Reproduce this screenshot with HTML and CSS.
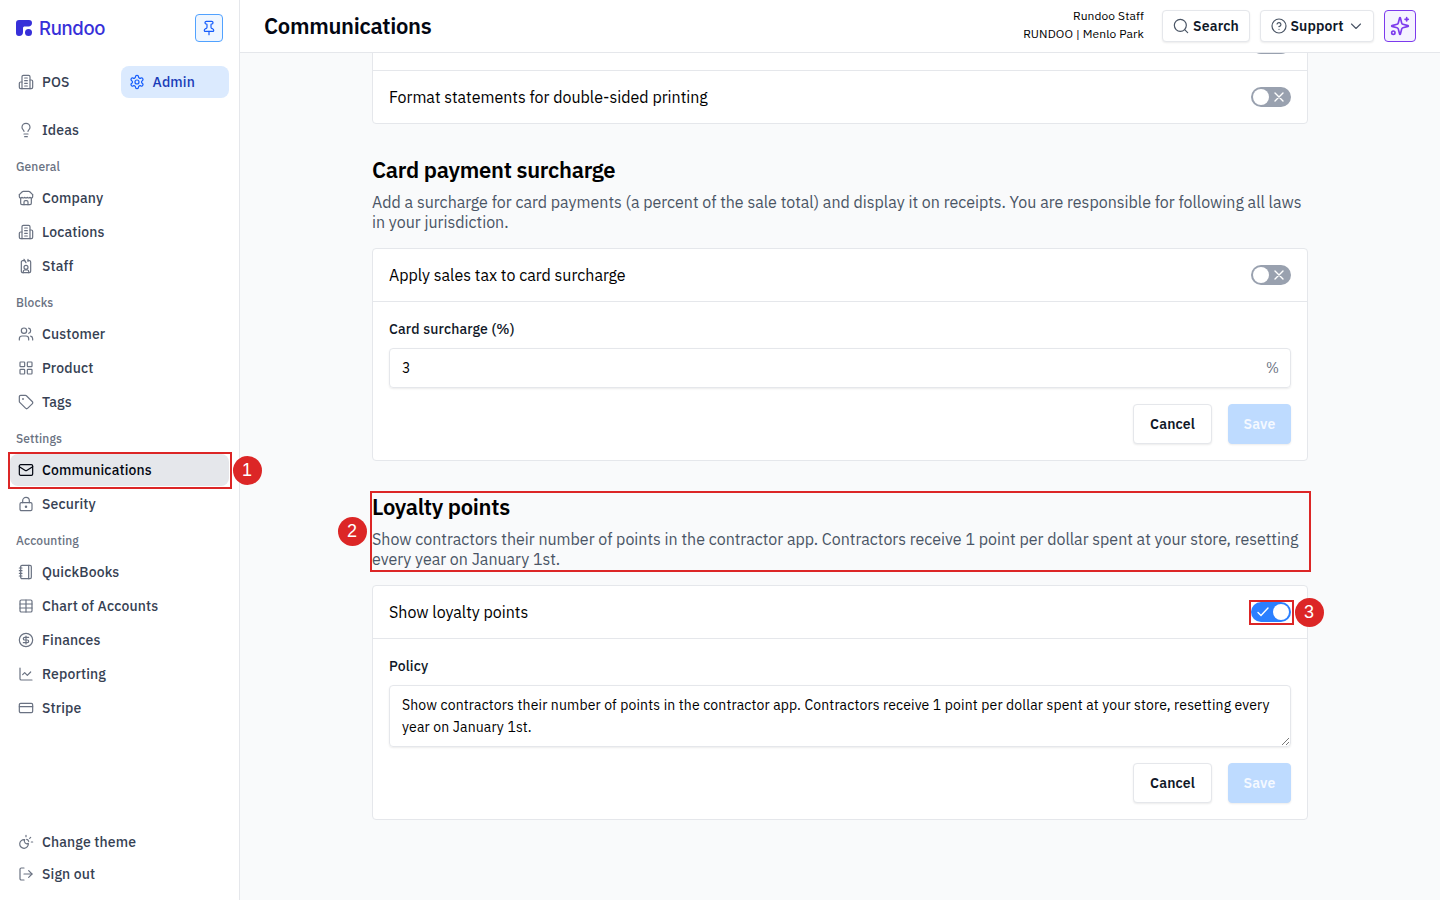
FILE: index.html
```html
<!DOCTYPE html>
<html lang="en">
<head>
  <meta charset="UTF-8" />
  <meta name="viewport" content="width=device-width, initial-scale=1.0" />
  <title>Communications</title>
  <link rel="stylesheet" href="styles.css">
</head>
<body>
  <aside class="sidebar">
    <div class="brand">
      <div class="logo">
        <svg width="16" height="16" viewBox="0 0 16 16" fill="currentColor"><path d="M3 0h10a3 3 0 0 1 3 3c0 2.200-1.500 3.500-3.500 3.500H9c-1.500 0-2 .5-2 2V12a4 4 0 0 1-4 4 3 3 0 0 1-3-3V3a3 3 0 0 1 3-3z"/><circle cx="12.500" cy="12.500" r="3.500"/></svg>
        <span>Rundoo</span>
      </div>
      <button class="pin-btn">
        <svg class="icon" viewBox="0 0 24 24"><path d="M12 17v5"/><path d="M9 10.760a2 2 0 0 1-1.110 1.790l-1.780.9A2 2 0 0 0 5 15.240V16a1 1 0 0 0 1 1h12a1 1 0 0 0 1-1v-.760a2 2 0 0 0-1.110-1.790l-1.780-.9A2 2 0 0 1 15 10.760V7a1 1 0 0 1 1-1 2 2 0 0 0 0-4H8a2 2 0 0 0 0 4 1 1 0 0 1 1 1z"/></svg>
      </button>
    </div>

    <nav class="nav">
      <div class="modes">
        <a class="nav-item"><svg class="icon" viewBox="0 0 24 24"><path d="M6 22V4a2 2 0 0 1 2-2h8a2 2 0 0 1 2 2v18Z"/><path d="M6 12H4a2 2 0 0 0-2 2v6a2 2 0 0 0 2 2h2"/><path d="M18 9h2a2 2 0 0 1 2 2v9a2 2 0 0 1-2 2h-2"/><path d="M10 6h4M10 10h4M10 14h4M10 18h4"/></svg><span>POS</span></a>
        <a class="nav-item admin"><svg class="icon" viewBox="0 0 24 24"><path d="M12.220 2h-.440a2 2 0 0 0-2 2v.180a2 2 0 0 1-1 1.730l-.430.250a2 2 0 0 1-2 0l-.150-.080a2 2 0 0 0-2.730.730l-.220.380a2 2 0 0 0 .730 2.730l.150.100a2 2 0 0 1 1 1.720v.510a2 2 0 0 1-1 1.740l-.150.090a2 2 0 0 0-.730 2.730l.220.380a2 2 0 0 0 2.730.730l.150-.080a2 2 0 0 1 2 0l.430.250a2 2 0 0 1 1 1.730V20a2 2 0 0 0 2 2h.440a2 2 0 0 0 2-2v-.180a2 2 0 0 1 1-1.730l.430-.250a2 2 0 0 1 2 0l.150.080a2 2 0 0 0 2.730-.730l.220-.390a2 2 0 0 0-.730-2.730l-.150-.080a2 2 0 0 1-1-1.740v-.500a2 2 0 0 1 1-1.740l.150-.090a2 2 0 0 0 .730-2.730l-.220-.380a2 2 0 0 0-2.730-.730l-.150.080a2 2 0 0 1-2 0l-.430-.250a2 2 0 0 1-1-1.730V4a2 2 0 0 0-2-2z"/><circle cx="12" cy="12" r="3"/></svg><span>Admin</span></a>
      </div>

      <a class="nav-item"><svg class="icon" viewBox="0 0 24 24"><path d="M15 14c.200-1 .700-1.700 1.500-2.500 1-.900 1.500-2.200 1.500-3.500A6 6 0 0 0 6 8c0 1 .200 2.200 1.500 3.500.700.700 1.300 1.500 1.500 2.500"/><path d="M9 18h6"/><path d="M10 22h4"/></svg><span>Ideas</span></a>

      <h3 class="nav-label">General</h3>
      <a class="nav-item"><svg class="icon" viewBox="0 0 24 24"><path d="m2 7 4.410-4.410A2 2 0 0 1 7.830 2h8.340a2 2 0 0 1 1.420.590L22 7"/><path d="M4 12v8a2 2 0 0 0 2 2h12a2 2 0 0 0 2-2v-8"/><path d="M15 22v-4a2 2 0 0 0-2-2h-2a2 2 0 0 0-2 2v4"/><path d="M2 7v3a2 2 0 0 0 2 2 2.700 2.700 0 0 0 1.590-.630.700.700 0 0 1 .820 0A2.700 2.700 0 0 0 8 12a2.700 2.700 0 0 0 1.590-.630.700.700 0 0 1 .820 0A2.700 2.700 0 0 0 12 12a2.700 2.700 0 0 0 1.590-.630.700.700 0 0 1 .820 0A2.700 2.700 0 0 0 16 12a2.700 2.700 0 0 0 1.590-.630.700.700 0 0 1 .820 0A2.700 2.700 0 0 0 20 12a2 2 0 0 0 2-2V7"/></svg><span>Company</span></a>
      <a class="nav-item"><svg class="icon" viewBox="0 0 24 24"><path d="M6 22V4a2 2 0 0 1 2-2h8a2 2 0 0 1 2 2v18Z"/><path d="M6 12H4a2 2 0 0 0-2 2v6a2 2 0 0 0 2 2h2"/><path d="M18 9h2a2 2 0 0 1 2 2v9a2 2 0 0 1-2 2h-2"/><path d="M10 6h4M10 10h4M10 14h4M10 18h4"/></svg><span>Locations</span></a>
      <a class="nav-item"><svg class="icon" viewBox="0 0 24 24"><path d="M15 2v3M9 2l3 5"/><path d="M15 4h2a2 2 0 0 1 2 2v14a2 2 0 0 1-2 2H7a2 2 0 0 1-2-2V6a2 2 0 0 1 2-2h3"/><path d="M16 22v-2a2 2 0 0 0-2-2h-4a2 2 0 0 0-2 2v2"/><circle cx="12" cy="14" r="3"/></svg><span>Staff</span></a>

      <h3 class="nav-label">Blocks</h3>
      <a class="nav-item"><svg class="icon" viewBox="0 0 24 24"><path d="M16 21v-2a4 4 0 0 0-4-4H6a4 4 0 0 0-4 4v2"/><circle cx="9" cy="7" r="4"/><path d="M22 21v-2a4 4 0 0 0-3-3.870"/><path d="M16 3.130a4 4 0 0 1 0 7.750"/></svg><span>Customer</span></a>
      <a class="nav-item"><svg class="icon" viewBox="0 0 24 24"><rect width="7" height="7" x="3" y="3" rx="1"/><rect width="7" height="7" x="14" y="3" rx="1"/><rect width="7" height="7" x="14" y="14" rx="1"/><rect width="7" height="7" x="3" y="14" rx="1"/></svg><span>Product</span></a>
      <a class="nav-item"><svg class="icon" viewBox="0 0 24 24"><path d="M12.586 2.586A2 2 0 0 0 11.172 2H4a2 2 0 0 0-2 2v7.172a2 2 0 0 0 .586 1.414l8.704 8.704a2.426 2.426 0 0 0 3.420 0l6.580-6.580a2.426 2.426 0 0 0 0-3.420z"/><circle cx="7.500" cy="7.500" r=".5" fill="currentColor"/></svg><span>Tags</span></a>

      <h3 class="nav-label">Settings</h3>
      <a class="nav-item active"><svg class="icon" viewBox="0 0 24 24"><rect width="20" height="16" x="2" y="4" rx="2"/><path d="m22 7-8.970 5.700a1.940 1.940 0 0 1-2.060 0L2 7"/></svg><span>Communications</span></a>
      <a class="nav-item"><svg class="icon" viewBox="0 0 24 24"><circle cx="12" cy="16" r="1"/><rect x="3" y="10" width="18" height="12" rx="2"/><path d="M7 10V7a5 5 0 0 1 10 0v3"/></svg><span>Security</span></a>

      <h3 class="nav-label">Accounting</h3>
      <a class="nav-item"><svg class="icon" viewBox="0 0 24 24"><path d="M2 6h4M2 10h4M2 14h4M2 18h4"/><rect width="16" height="20" x="4" y="2" rx="2"/><path d="M16 2v20"/></svg><span>QuickBooks</span></a>
      <a class="nav-item"><svg class="icon" viewBox="0 0 24 24"><path d="M12 3v18"/><rect width="18" height="18" x="3" y="3" rx="2"/><path d="M3 9h18M3 15h18"/></svg><span>Chart of Accounts</span></a>
      <a class="nav-item"><svg class="icon" viewBox="0 0 24 24"><circle cx="12" cy="12" r="10"/><path d="M16 8h-6a2 2 0 1 0 0 4h4a2 2 0 1 1 0 4H8"/><path d="M12 18V6"/></svg><span>Finances</span></a>
      <a class="nav-item"><svg class="icon" viewBox="0 0 24 24"><path d="M3 3v16a2 2 0 0 0 2 2h16"/><path d="m7 13 3-3 4 4 5-5"/></svg><span>Reporting</span></a>
      <a class="nav-item"><svg class="icon" viewBox="0 0 24 24"><rect width="20" height="14" x="2" y="5" rx="2"/><path d="M2 10h20"/></svg><span>Stripe</span></a>
    </nav>

    <div class="nav-footer">
      <a class="nav-item"><svg class="icon" viewBox="0 0 24 24"><path d="M12 2v2M19 5l-1.500 1.500M20 12h2M10 8.500a4 4 0 0 0 5.500 5.500A6.500 6.500 0 1 1 10 8.500M13 8a4 4 0 0 1 3 3"/></svg><span>Change theme</span></a>
      <a class="nav-item"><svg class="icon" viewBox="0 0 24 24"><path d="M9 21H5a2 2 0 0 1-2-2V5a2 2 0 0 1 2-2h4"/><path d="m16 17 5-5-5-5"/><path d="M21 12H9"/></svg><span>Sign out</span></a>
    </div>
  </aside>

  <div class="page">
    <header class="topbar">
      <h1>Communications</h1>
      <div class="account">
        <span>Rundoo Staff</span>
        <span>RUNDOO | Menlo Park</span>
      </div>
      <button class="btn top-btn search-btn">
        <svg class="icon" viewBox="0 0 24 24"><circle cx="11" cy="11" r="9"/><path d="m22 22-4.500-4.500"/></svg>
        <span>Search</span>
      </button>
      <button class="btn top-btn support-btn">
        <svg class="icon" viewBox="0 0 24 24"><circle cx="12" cy="12" r="10.500"/><path d="M9.090 9a3 3 0 0 1 5.830 1c0 2-3 3-3 3"/><path d="M12 17h.010"/></svg>
        <span>Support</span>
        <svg class="icon chevron" viewBox="0 0 24 24"><path d="m3 8 9 9 9-9"/></svg>
      </button>
      <button class="ai-btn">
        <svg class="icon" viewBox="0 0 24 24"><path d="M9.937 15.500A2 2 0 0 0 8.500 14.063l-6.135-1.582a.5.5 0 0 1 0-.962L8.500 9.936A2 2 0 0 0 9.937 8.500l1.582-6.135a.5.5 0 0 1 .963 0L14.063 8.500A2 2 0 0 0 15.500 9.937l6.135 1.581a.5.5 0 0 1 0 .964L15.500 14.063a2 2 0 0 0-1.437 1.437l-1.582 6.135a.5.5 0 0 1-.963 0z"/><path d="M20 2v4M22 4h-4"/><circle cx="4" cy="20" r="2"/></svg>
      </button>
    </header>

    <main class="content">
      <div class="column">
        <div class="card statements">
          <div class="row">
            <span>Apply account credit when customers repay</span>
            <div class="toggle"><i></i><svg viewBox="0 0 10 10"><path d="m1 1 8 8M9 1 1 9"/></svg></div>
          </div>
          <div class="row">
            <span>Format statements for double-sided printing</span>
            <div class="toggle"><i></i><svg viewBox="0 0 10 10"><path d="m1 1 8 8M9 1 1 9"/></svg></div>
          </div>
        </div>

        <section>
          <h2>Card payment surcharge</h2>
          <p class="desc">Add a surcharge for card payments (a percent of the sale total) and display it on receipts. You are responsible for following all laws<br>in your jurisdiction.</p>
          <div class="card">
            <div class="row">
              <span>Apply sales tax to card surcharge</span>
              <div class="toggle"><i></i><svg viewBox="0 0 10 10"><path d="m1 1 8 8M9 1 1 9"/></svg></div>
            </div>
            <div class="form">
              <label>Card surcharge (%)</label>
              <div class="input"><span>3</span><span class="suffix">%</span></div>
              <div class="actions">
                <button class="btn">Cancel</button>
                <button class="btn save">Save</button>
              </div>
            </div>
          </div>
        </section>

        <section>
          <h2>Loyalty points</h2>
          <p class="desc">Show contractors their number of points in the contractor app. Contractors receive 1 point per dollar spent at your store, resetting<br>every year on January 1st.</p>
          <div class="card">
            <div class="row">
              <span>Show loyalty points</span>
              <div class="toggle on"><svg viewBox="0 0 12 10"><path d="m1 5.500 3 3L11 1"/></svg><i></i></div>
            </div>
            <div class="form">
              <label>Policy</label>
              <div class="input textarea">
                <span>Show contractors their number of points in the contractor app. Contractors receive 1 point per dollar spent at your store, resetting every<br>year on January 1st.</span>
                <svg class="grip" width="9" height="9" viewBox="0 0 9 9"><path d="M1 8 8 1M5 8l3-3"/></svg>
              </div>
              <div class="actions">
                <button class="btn">Cancel</button>
                <button class="btn save">Save</button>
              </div>
            </div>
          </div>
        </section>
      </div>
    </main>
  </div>

  <!-- walkthrough steps -->
  <div class="mark mark-1"></div>
  <div class="step step-1">1</div>
  <div class="mark mark-2"></div>
  <div class="step step-2">2</div>
  <div class="mark mark-3"></div>
  <div class="step step-3">3</div>
</body>
</html>
```
FILE: styles.css
```css
* {
  box-sizing: border-box;
  margin: 0;
  padding: 0;
}

body {
  display: flex;
  position: relative;
  width: 1440px;
  height: 900px;
  overflow: hidden;
  background: #f9fafb;
  color: #000;
  font-family: "IBM Plex Sans", Roboto, sans-serif;
}

button {
  font-family: inherit;
}

.icon {
  width: 16px;
  height: 16px;
  flex-shrink: 0;
  fill: none;
  stroke: currentColor;
  stroke-width: 1.8;
  stroke-linecap: round;
  stroke-linejoin: round;
}

/* sidebar */
.sidebar {
  display: flex;
  flex-direction: column;
  width: 240px;
  flex-shrink: 0;
  padding: 14px 10px 10px;
  background: #fff;
  border-right: 1px solid #e5e7eb;
}

.brand {
  display: flex;
  justify-content: space-between;
  height: 28px;
  padding: 0 6px;
}

.logo {
  display: flex;
  align-items: center;
  gap: 7px;
  color: #3730d9;
  font-family: Inter, sans-serif;
  font-size: 18.5px;
  font-weight: 500;
  letter-spacing: -0.3px;
}

.pin-btn {
  display: flex;
  align-items: center;
  justify-content: center;
  width: 28px;
  height: 28px;
  border: 1px solid #51a2ff;
  border-radius: 4px;
  background: #eff6ff;
  color: #155dfc;
}

.nav {
  display: flex;
  flex-direction: column;
  gap: 2px;
  margin-top: 24px;
}

.modes {
  display: grid;
  grid-template-columns: 108px 108px;
  gap: 3px;
  margin-bottom: 14px;
}

.nav-item {
  display: flex;
  align-items: center;
  gap: 8px;
  height: 32px;
  padding: 0 8px;
  border-radius: 8px;
  color: #364153;
  font-size: 14px;
  font-weight: 500;
  letter-spacing: 0.01em;
}

.nav-item .icon {
  color: #6a7282;
}

.nav-item.admin {
  gap: 7.5px;
  background: #dbeafe;
  color: #193cb8;
}

.nav-item.admin .icon {
  color: #155dfc;
}

.nav-item.active {
  background: #e5e7eb;
  color: #030712;
}

.nav-item.active .icon {
  color: #030712;
}

.nav-label {
  height: 32px;
  padding: 11px 6px 0;
  color: #6a7282;
  font-size: 12px;
  font-weight: 500;
  line-height: 16px;
  letter-spacing: 0.01em;
}

.nav-footer {
  margin-top: auto;
}

/* top bar */
.page {
  display: flex;
  flex-direction: column;
  width: 1200px;
}

.topbar {
  display: flex;
  align-items: center;
  height: 53px;
  flex-shrink: 0;
  padding: 0 24px;
  background: #fff;
  border-bottom: 1px solid #e5e7eb;
}

.topbar h1 {
  margin-bottom: 2px;
  color: #030712;
  font-size: 22px;
  font-weight: 600;
  letter-spacing: -0.3px;
}

.account {
  display: flex;
  flex-direction: column;
  align-items: flex-end;
  margin-left: auto;
  margin-right: 18px;
  margin-bottom: 2px;
  font-size: 12px;
  line-height: 18px;
  letter-spacing: 0.1px;
}

.btn {
  display: flex;
  align-items: center;
  justify-content: center;
  height: 40px;
  width: 79px;
  border: 1px solid #e5e7eb;
  border-radius: 4px;
  background: #fff;
  box-shadow: 0 1px 2px rgba(0, 0, 0, 0.08);
  color: #101828;
  font-size: 14px;
  font-weight: 600;
  letter-spacing: 0.01em;
}

.top-btn {
  height: 32px;
  gap: 4px;
  margin-right: 10px;
}

.top-btn .icon {
  color: #4a5565;
}

.search-btn {
  width: 88px;
}

.support-btn {
  width: 114px;
  gap: 3px;
}

.support-btn .chevron {
  width: 12px;
  height: 12px;
  margin-left: 3px;
  margin-right: 1px;
  stroke-width: 2.2;
}

.ai-btn {
  display: flex;
  align-items: center;
  justify-content: center;
  width: 32px;
  height: 32px;
  border: 1px solid #7c3aed;
  border-radius: 4px;
  background: #f5f3ff;
  color: #7c3aed;
}

.ai-btn .icon {
  width: 20px;
  height: 20px;
  stroke-width: 2;
}

/* content */
.content {
  flex: 1;
  overflow: hidden;
}

.column {
  width: 936px;
  margin: 0 auto;
}

.card {
  border: 1px solid #e5e7eb;
  border-radius: 4px;
  background: #fff;
}

.statements {
  margin-top: -36px;
}

.row {
  display: flex;
  align-items: center;
  justify-content: space-between;
  height: 52px;
  padding: 0 16px;
  font-size: 16px;
}

.row + .row,
.form {
  border-top: 1px solid #e5e7eb;
}

.row + .row {
  height: 53px;
}

.toggle {
  display: flex;
  align-items: center;
  justify-content: space-between;
  width: 40px;
  height: 20px;
  padding: 0 7px 0 2px;
  border-radius: 10px;
  background: #99a1af;
}

.toggle i {
  width: 16px;
  height: 16px;
  border-radius: 50%;
  background: #fff;
}

.toggle svg {
  width: 10px;
  height: 10px;
  fill: none;
  stroke: #fff;
  stroke-width: 1.4;
  stroke-linecap: round;
}

.toggle.on {
  padding: 0 2px 0 6px;
  background: #2b7fff;
}

.toggle.on svg {
  width: 12px;
}

section {
  padding-top: 32px;
}

section h2 {
  height: 30px;
  font-size: 22px;
  font-weight: 600;
  line-height: 28px;
  letter-spacing: -0.3px;
}

.desc {
  margin: 6px 0 16px;
  color: #4a5565;
  font-size: 16px;
  line-height: 20px;
  white-space: nowrap;
}

.form {
  padding: 16px;
}

.form label {
  display: block;
  height: 30px;
  color: #101828;
  font-size: 14px;
  font-weight: 500;
  line-height: 22px;
  letter-spacing: 0.01em;
}

.input {
  display: flex;
  position: relative;
  align-items: center;
  justify-content: space-between;
  height: 40px;
  padding: 0 11px 0 12px;
  border: 1px solid #e5e7eb;
  border-radius: 4px;
  box-shadow: 0 1px 2px rgba(0, 0, 0, 0.08);
  font-size: 14px;
  line-height: 22px;
  letter-spacing: 0.01em;
}

.suffix {
  color: #6a7282;
}

.textarea {
  height: 62px;
  white-space: nowrap;
}

.grip {
  position: absolute;
  right: 0;
  bottom: 0;
  fill: none;
  stroke: #555;
  stroke-width: 0.8;
}

.actions {
  display: flex;
  justify-content: flex-end;
  gap: 16px;
  margin-top: 16px;
}

.save {
  width: 63px;
  border-color: #bedbff;
  background: #bedbff;
  color: #f5f9ff;
}

/* walkthrough steps */
.mark {
  position: absolute;
  border: 2px solid #dc2626;
}

.mark-1 {
  left: 8px;
  top: 452px;
  width: 224px;
  height: 37px;
}

.mark-2 {
  left: 370px;
  top: 491px;
  width: 941px;
  height: 81px;
}

.mark-3 {
  left: 1249px;
  top: 600px;
  width: 45px;
  height: 25px;
}

.step {
  position: absolute;
  width: 29px;
  height: 29px;
  padding-right: 1px;
  border-radius: 50%;
  background: #dc2626;
  color: #fff;
  font-family: "Liberation Sans", Arial, sans-serif;
  font-size: 18px;
  line-height: 29px;
  text-align: center;
}

.step-1 {
  left: 233px;
  top: 456px;
}

.step-2 {
  left: 338px;
  top: 517px;
}

.step-3 {
  left: 1295px;
  top: 598px;
}
```
